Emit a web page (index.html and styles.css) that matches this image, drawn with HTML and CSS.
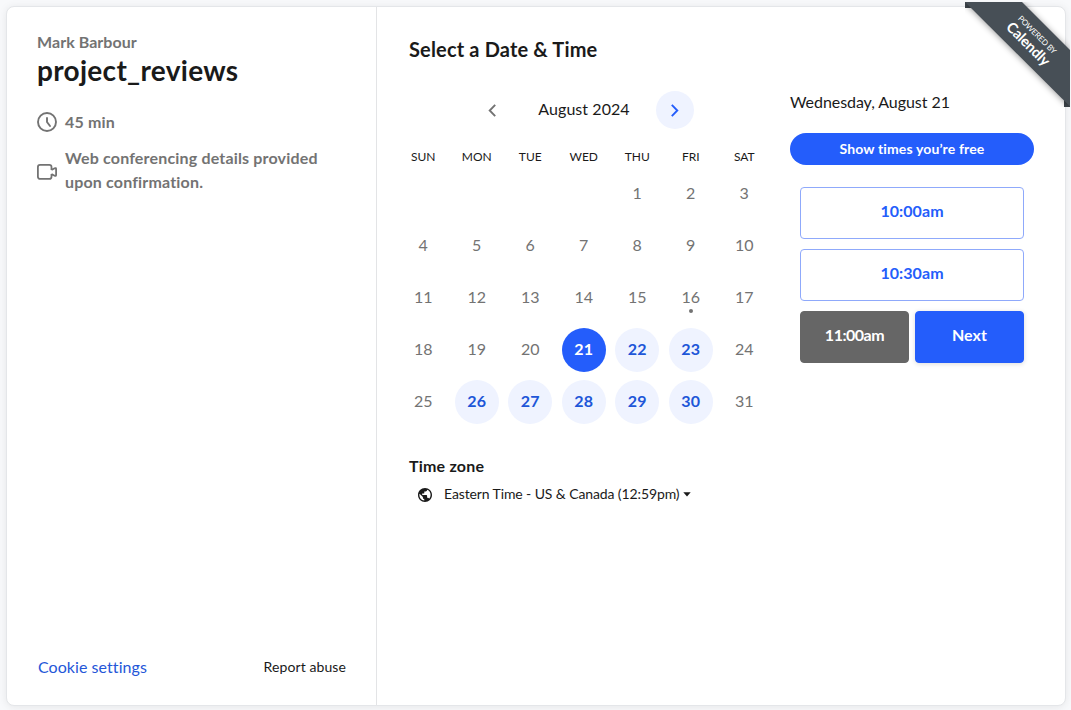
FILE: index.html
```html
<!DOCTYPE html>
<html lang="en">
<head>
<meta charset="utf-8">
<title>project_reviews - Mark Barbour</title>
<link rel="stylesheet" href="styles.css">
</head>
<body>
<main class="card">
  <aside class="details">
    <div class="host"><span>Mark Barbour</span></div>
    <h1 class="event"><span>project_reviews</span></h1>
    <div class="meta duration">
      <svg class="meta-icon" viewBox="0 0 10 10"><path d="M.5 5a4.5 4.5 0 1 0 9 0 4.5 4.5 0 1 0-9 0M5 3.01v2l1.5 2" fill="none" stroke="currentColor" stroke-width=".95" stroke-linecap="round" stroke-linejoin="round"/></svg>
      <span>45 min</span>
    </div>
    <div class="meta place">
      <svg class="meta-icon" viewBox="0 0 20 20"><path d="M14.500 8V5.100a2.200 2.200 0 0 0-2.200-2.200H3A2.200 2.200 0 0 0 .9 5.100v9.600a2.200 2.200 0 0 0 2.200 2.200h9.200a2.200 2.200 0 0 0 2.200-2.200V12M14.500 8l3.100-1.700q1.500-.6 1.500.7v6q0 1.300-1.500.7L14.500 12" fill="none" stroke="currentColor" stroke-width="1.800" stroke-linejoin="round"/></svg>
      <div class="place-text">Web conferencing details provided<br>upon confirmation.</div>
    </div>
    <footer class="links">
      <a class="cookie">Cookie settings</a>
      <a class="report">Report abuse</a>
    </footer>
  </aside>
  <section class="booking">
    <h2 class="heading">Select a Date &amp; Time</h2>
    <div class="columns">
      <div class="calendar">
        <div class="month-bar">
          <button class="arrow"><svg viewBox="0 0 8 13"><path d="M7.200.800 1.700 6.500l5.500 5.700" fill="none" stroke="currentColor" stroke-width="1.900"/></svg></button>
          <span class="month">August 2024</span>
          <button class="arrow next-month"><svg viewBox="0 0 8 13"><path d="M.8.800 6.300 6.500.800 12.200" fill="none" stroke="currentColor" stroke-width="1.900"/></svg></button>
        </div>
        <div class="week names"><span>SUN</span><span>MON</span><span>TUE</span><span>WED</span><span>THU</span><span>FRI</span><span>SAT</span></div>
        <div class="week days">
          <i></i><i></i><i></i><i></i><span>1</span><span>2</span><span>3</span>
          <span>4</span><span>5</span><span>6</span><span>7</span><span>8</span><span>9</span><span>10</span>
          <span>11</span><span>12</span><span>13</span><span>14</span><span>15</span><span class="today">16</span><span>17</span>
          <span>18</span><span>19</span><span>20</span><span class="open selected">21</span><span class="open">22</span><span class="open">23</span><span>24</span>
          <span>25</span><span class="open">26</span><span class="open">27</span><span class="open">28</span><span class="open">29</span><span class="open">30</span><span>31</span>
        </div>
        <h3 class="zone-title">Time zone</h3>
        <div class="zone">
          <svg class="globe" viewBox="0 0 14 14"><path fill="currentColor" d="M7 0C3.136 0 0 3.136 0 7s3.136 7 7 7 7-3.136 7-7-3.136-7-7-7Zm-.7 12.551A5.594 5.594 0 0 1 1.400 7c0-.434.056-.847.147-1.253L4.900 9.100v.7c0 .77.630 1.400 1.400 1.400v1.351Zm4.830-1.778A1.391 1.391 0 0 0 9.800 9.800h-.7V7.700c0-.385-.315-.7-.7-.7H4.200V5.600h1.400c.385 0 .7-.315.7-.7V3.500h1.400c.770 0 1.400-.630 1.400-1.400v-.287A5.603 5.603 0 0 1 12.600 7a5.576 5.576 0 0 1-1.470 3.773Z"/></svg>
          <span class="zone-name">Eastern Time - US &amp; Canada (12:59pm)</span>
          <svg class="caret" viewBox="0 0 8 5"><path d="M.3.300h7.400L4 4.600z" fill="currentColor"/></svg>
        </div>
      </div>
      <div class="times">
        <div class="date">Wednesday, August 21</div>
        <button class="free">Show times you’re free</button>
        <div class="slots">
          <button class="slot">10:00am</button>
          <button class="slot">10:30am</button>
          <div class="confirm">
            <button class="slot chosen">11:00am</button>
            <button class="slot next">Next</button>
          </div>
        </div>
      </div>
    </div>
  </section>
</main>
<div class="ribbon">
  <svg viewBox="0 0 105 105"><path d="M0 0h8v6H0zM99 97h6v8h-6z" fill="#3e454b"/><path class="band" d="M0 0h57l48 48v56.500L0 0z" fill="#474f56"/></svg>
  <div class="ribbon-text"><span class="powered">POWERED BY</span><span class="brand">Calendly</span></div>
</div>
</body>
</html>
```
FILE: styles.css
```css
* { box-sizing: border-box; }
body { margin: 0; height: 710px; padding: 6px 5px 4px 6px; background: #f8f9fb; overflow: hidden; font-family: Lato, "Open Sans", sans-serif; font-size: 16px; color: #1a1a1a; }
h1, h2, h3 { margin: 0; }
button { margin: 0; padding: 0; border: 0; font: inherit; }
.card { display: flex; height: 700px; border: 1px solid #e4e6e9; border-radius: 8px; background: #fff; box-shadow: 0 1px 8px rgba(0, 0, 0, .08); }
.details { display: flex; flex-direction: column; width: 370px; padding: 23px 30px 26px 30px; border-right: 1px solid #e3e4e6; color: #737373; font-weight: 700; }
.host { line-height: 24px; letter-spacing: .05px; }
.event { font-size: 28px; line-height: 32px; color: #1a1a1a; letter-spacing: .3px; }
.meta { display: flex; align-items: center; gap: 8px; line-height: 24px; letter-spacing: .17px; white-space: nowrap; }
.meta-icon { width: 20px; height: 20px; flex: none; }
.duration { margin-top: 24px; }
.place { margin-top: 12px; }
.place .meta-icon { margin-top: 4px; }
.links { display: flex; justify-content: space-between; align-items: center; margin-top: auto; padding-left: 1px; line-height: 24px; font-weight: 400; }
.cookie { color: #2456d8; letter-spacing: .06px; }
.report { font-size: 14px; color: #1a1a1a; letter-spacing: .1px; }
.booking { flex: 1; padding: 28px 31px 0 19.500px; }
.heading { padding-left: 12.500px; font-size: 20px; line-height: 28px; letter-spacing: .16px; }
.columns { display: flex; justify-content: space-between; margin-top: 28px; }
.calendar { width: 375px; }
.month-bar { display: flex; justify-content: center; align-items: center; gap: 26px; height: 38px; }
.arrow { display: flex; width: 38px; height: 38px; align-items: center; justify-content: center; border-radius: 50%; background: none; color: #737373; padding-right: 2px; }
.arrow svg { width: 8px; height: 13px; }
.arrow.next-month { padding: 0; background: #eff3ff; color: #245dfb; }
.month { width: 92px; padding-bottom: 3px; text-align: center; white-space: nowrap; line-height: 24px; letter-spacing: .06px; }
.week { display: grid; grid-template-columns: repeat(7, 53.500px); justify-items: center; }
.names { margin-top: 20px; font-size: 12px; line-height: 16px; }
.days { grid-auto-rows: 52px; align-items: center; margin-top: 3px; color: #737373; }
.days span { position: relative; width: 44px; height: 44px; border-radius: 50%; line-height: 42px; text-align: center; }
.days .open { background: #eff3ff; color: #2056d8; font-weight: 700; letter-spacing: .3px; }
.days .selected { background: #245dfb; color: #fff; }
.today::after { content: ""; position: absolute; left: 20px; top: 33px; width: 4px; height: 4px; border-radius: 50%; background: #737373; }
.zone-title { margin-top: 26px; padding-left: 12.500px; font-size: 16px; line-height: 24px; letter-spacing: .2px; }
.zone { display: flex; align-items: center; padding-left: 21.500px; margin-top: 5px; font-size: 14px; line-height: 22px; white-space: nowrap; }
.zone-name { padding-bottom: 1px; letter-spacing: -.11px; }
.globe { width: 14px; height: 14px; margin-right: 12px; }
.caret { width: 8px; height: 5px; margin-left: 4px; }
.times { width: 244px; }
.date { margin-top: -1px; line-height: 24px; letter-spacing: -.06px; }
.free { display: block; width: 244px; height: 32px; margin-top: 19px; border-radius: 16px; background: #245dfb; color: #fff; font-size: 14px; font-weight: 700; line-height: 30px; letter-spacing: .13px; }
.slots { display: grid; gap: 10px; padding: 0 10px; margin-top: 22px; }
.slot { height: 52px; padding-bottom: 4px; border: 1px solid #8fa9fb; border-radius: 4px; background: #fff; color: #245dfb; font-weight: 700; line-height: 46px; letter-spacing: .06px; }
.confirm { display: grid; grid-template-columns: 1fr 1fr; gap: 6px; }
.chosen { border-color: #666; background: #666; color: #fff; letter-spacing: -.5px; }
.next { border-color: #245dfb; background: #245dfb; color: #fff; box-shadow: 0 1px 5px rgba(0, 0, 0, .14); }
.ribbon { position: absolute; top: 2px; left: 965px; width: 105px; height: 105px; overflow: hidden; }
.ribbon svg { display: block; width: 105px; height: 105px; }
.band { filter: drop-shadow(0 1px 3px rgba(0, 0, 0, .4)); }
.ribbon-text { position: absolute; left: 15.500px; top: 25px; width: 100px; height: 28px; display: flex; flex-direction: column; align-items: center; transform: rotate(45deg); color: #fff; }
.powered { font-size: 8px; line-height: 10px; letter-spacing: -.15px; }
.brand { font-size: 14.500px; line-height: 16px; font-weight: 700; letter-spacing: -.15px; }
```
